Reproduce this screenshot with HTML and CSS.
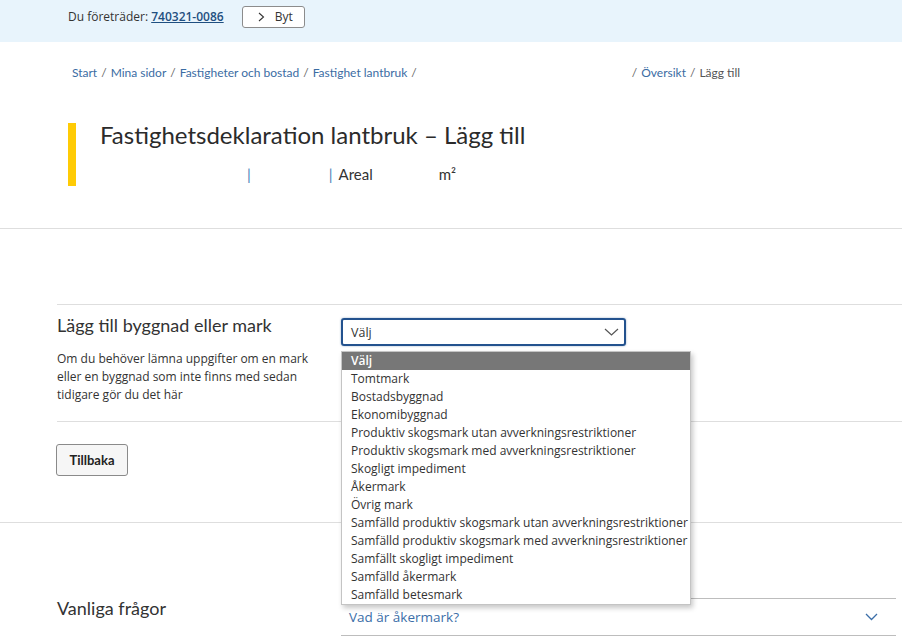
FILE: index.html
```html
<!DOCTYPE html>
<html lang="sv">
<head>
<meta charset="utf-8">
<title>Fastighetsdeklaration lantbruk – Lägg till</title>
<link rel="stylesheet" href="styles.css">
</head>
<body>
<header class="topbar">
  <span class="rep">Du företräder: <a href="#">740321-0086</a></span>
  <button class="switch" type="button">
    <svg class="switch-icon" width="7" height="10" viewBox="0 0 7 10"><path d="M1 1l4.5 4L1 9" fill="none" stroke="#333" stroke-width="1.1"/></svg>
    <span>Byt</span>
  </button>
</header>

<nav class="crumbs">
  <a href="#">Start</a><span class="sep">/</span>
  <a href="#">Mina sidor</a><span class="sep">/</span>
  <a href="#">Fastigheter och bostad</a><span class="sep">/</span>
  <a href="#">Fastighet lantbruk</a><span class="sep">/</span>
  <span class="crumb-gap"></span>
  <span class="sep">/</span><a href="#">Översikt</a><span class="sep">/</span>
  <span class="current">Lägg till</span>
</nav>

<section class="pagehead">
  <h1>Fastighetsdeklaration lantbruk – Lägg till</h1>
  <div class="meta">
    <span class="blank b1"></span><span class="pipe">|</span><span class="blank b2"></span><span class="pipe">|</span><span class="areal">Areal</span><span class="blank b3"></span><span>m²</span>
  </div>
</section>

<div class="divider"></div>

<section class="form-section">
  <div class="form-row">
    <div class="form-info">
      <h2 class="form-title">Lägg till byggnad eller mark</h2>
      <p class="form-desc">Om du behöver lämna uppgifter om en mark eller en byggnad som inte finns med sedan tidigare gör du det här</p>
    </div>
    <div class="form-field">
      <div class="select">
        <span>Välj</span>
        <svg class="select-chev" width="15" height="8" viewBox="0 0 15 8"><path d="M1 1l6.5 6L14 1" fill="none" stroke="#555" stroke-width="1.2"/></svg>
        <ul class="options">
          <li class="active">Välj</li>
          <li>Tomtmark</li>
          <li>Bostadsbyggnad</li>
          <li>Ekonomibyggnad</li>
          <li>Produktiv skogsmark utan avverkningsrestriktioner</li>
          <li>Produktiv skogsmark med avverkningsrestriktioner</li>
          <li>Skogligt impediment</li>
          <li>Åkermark</li>
          <li>Övrig mark</li>
          <li>Samfälld produktiv skogsmark utan avverkningsrestriktioner</li>
          <li>Samfälld produktiv skogsmark med avverkningsrestriktioner</li>
          <li>Samfällt skogligt impediment</li>
          <li>Samfälld åkermark</li>
          <li>Samfälld betesmark</li>
        </ul>
      </div>
    </div>
  </div>
  <button class="back" type="button">Tillbaka</button>
</section>

<div class="divider divider-low"></div>

<section class="faq">
  <h2 class="faq-title">Vanliga frågor</h2>
  <div class="accordion">
    <div class="acc-item">
      <span>Vad är åkermark?</span>
      <svg width="13" height="8" viewBox="0 0 13 8"><path d="M1 1l5.5 5.5L12 1" fill="none" stroke="#3b6ea8" stroke-width="1.3"/></svg>
    </div>
  </div>
</section>
</body>
</html>
```
FILE: styles.css
```css
* { box-sizing: border-box; }
html, body { margin: 0; padding: 0; }
body {
  font-family: "Open Sans", "DejaVu Sans", sans-serif;
  color: #333;
  background: #fff;
  overflow: hidden;
}

/* top bar */
.topbar {
  height: 42px;
  background: #e8f4fc;
  display: flex;
  align-items: flex-start;
  padding: 6px 0 0 68px;
}
.rep {
  font-size: 12px;
  line-height: 22px;
  color: #333;
}
.rep a {
  color: #1f4f80;
  font-weight: 600;
  text-decoration: underline;
}
.switch {
  margin-left: 18px;
  height: 22px;
  width: 63px;
  border: 1px solid #8c8c8c;
  border-radius: 3px;
  background: #fff;
  display: flex;
  align-items: center;
  padding: 0 0 0 15px;
  gap: 10px;
  font: 12px/1 "Open Sans", sans-serif;
  color: #333;
}

/* breadcrumb */
.crumbs {
  display: flex;
  align-items: center;
  padding: 22px 0 0 72px;
  font: 12px/18px Lato, "Open Sans", sans-serif;
}
.crumbs a { color: #3b6ca3; text-decoration: none; }
.crumbs .sep { color: #666; margin: 0 4px; }
.crumbs .current { color: #555; }
.crumb-gap { width: 207px; }

/* page head */
.pagehead {
  margin: 41px 0 0 68px;
  border-left: 8px solid #ffcb05;
  padding: 0 0 2px 24px;
}
.pagehead h1 {
  margin: 0;
  font: 400 24px/24px Lato, sans-serif;
  color: #2b2b2b;
}
.meta {
  margin-top: 17px;
  display: flex;
  align-items: baseline;
  font: 15px/20px Lato, sans-serif;
  color: #333;
}
.blank { display: inline-block; }
.b1 { width: 147px; }
.b2 { width: 78px; }
.b3 { width: 66px; }
.pipe { color: #4a80b8; }
.areal { margin-left: 6px; }

.divider {
  border-top: 1px solid #dedede;
  margin-top: 42px;
}
.divider-low { margin-top: 46px; }

/* form */
.form-section {
  margin: 75px 0 0 57px;
  border-top: 1px solid #dedede;
}
.form-row {
  display: grid;
  grid-template-columns: 284px 1fr;
  border-bottom: 1px solid #dedede;
  padding-bottom: 17px;
}
.form-title {
  margin: 9px 0 0;
  font: 400 18px/22px Lato, sans-serif;
  color: #333;
}
.form-desc {
  margin: 14px 0 0;
  font-size: 12px;
  line-height: 18px;
  color: #333;
  width: 262px;
}
.form-field { padding-top: 13px; }
.select {
  position: relative;
  width: 285px;
  height: 28px;
  border: 2px solid #23528e;
  border-radius: 3px;
  box-shadow: 0 0 2px rgba(35, 82, 142, .5);
  display: flex;
  align-items: center;
  justify-content: space-between;
  padding: 0 5px 0 8px;
  font-size: 12.5px;
  color: #333;
}
.options {
  position: absolute;
  left: -2px;
  top: 31px;
  width: 350px;
  margin: 0;
  padding: 0;
  list-style: none;
  background: #fff;
  border: 1px solid #c4c4c4;
  box-shadow: 2px 3px 5px rgba(0, 0, 0, .22);
  z-index: 5;
}
.options li {
  height: 18px;
  line-height: 18px;
  padding-left: 9px;
  font-size: 12px;
  color: #333;
  white-space: nowrap;
}
.options li.active {
  background: #777;
  color: #fff;
  font-weight: 600;
}

.back {
  margin-top: 22px;
  width: 72px;
  height: 32px;
  margin-left: -1px;
  background: #f6f6f6;
  border: 1px solid #8a8a8a;
  border-radius: 3px;
  font: 700 13px Lato, sans-serif;
  color: #222;
}

/* faq */
.faq {
  display: grid;
  grid-template-columns: 284px 1fr;
  margin: 0 6px 0 57px;
  padding-top: 75px;
}
.faq-title {
  margin: -1px 0 0;
  font: 400 18px/22px Lato, sans-serif;
  color: #333;
}
.acc-item {
  height: 38px;
  border-top: 1px solid #bdbdbd;
  border-bottom: 1px solid #bdbdbd;
  display: flex;
  align-items: center;
  justify-content: space-between;
  padding: 0 18px 0 8px;
  font-size: 13.5px;
  color: #3b6ea8;
}
```
